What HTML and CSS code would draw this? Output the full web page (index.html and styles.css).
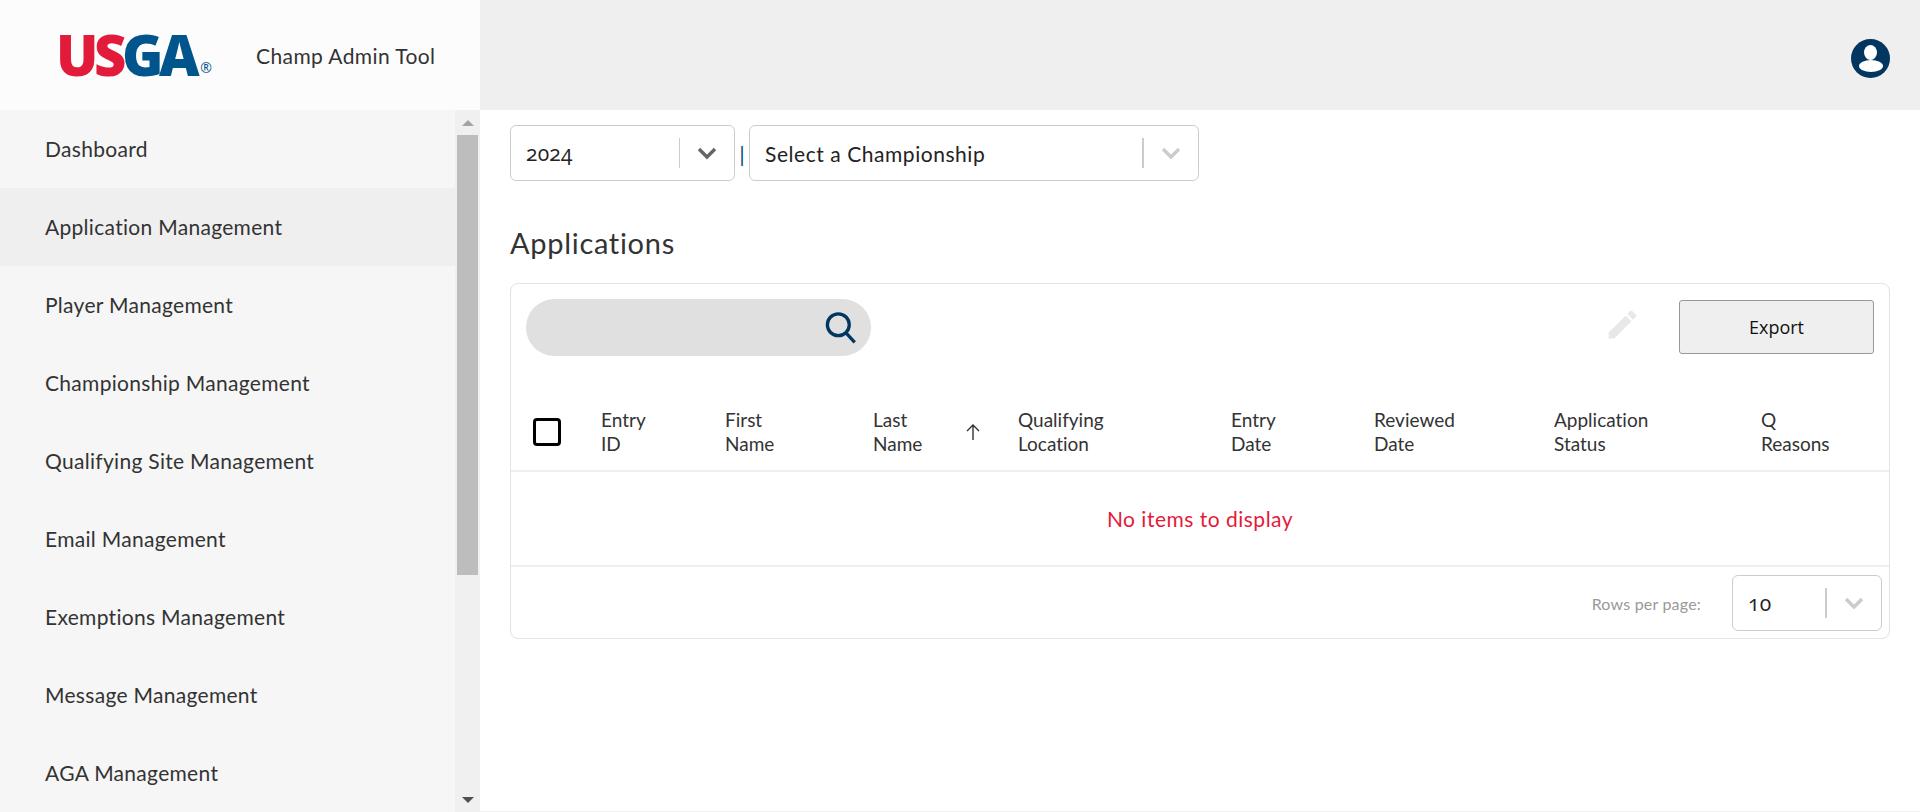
FILE: index.html
```html
<!DOCTYPE html>
<html lang="en">
<head>
    <meta charset="UTF-8">
    <title>Champ Admin Tool</title>
    <link rel="stylesheet" href="styles.css">
</head>
<body>
    <div class="topbar">
        <div class="brand">
            <div class="logo"><span class="logo-red">US</span><span class="logo-blue">GA</span><span class="logo-reg">&reg;</span></div>
            <div class="brand-title">Champ Admin Tool</div>
        </div>
        <div class="topbar-right">
            <svg class="avatar" viewBox="0 0 39 39">
                <circle cx="19.5" cy="19.5" r="19.5" fill="#00365f"/>
                <ellipse cx="19.5" cy="13.5" rx="6.5" ry="7.5" fill="#fff"/>
                <ellipse cx="20" cy="27" rx="12" ry="6" fill="#fff"/>
            </svg>
        </div>
    </div>
    <div class="layout">
        <div class="sidebar">
            <div class="nav">
                <div class="nav-item">Dashboard</div>
                <div class="nav-item active">Application Management</div>
                <div class="nav-item">Player Management</div>
                <div class="nav-item">Championship Management</div>
                <div class="nav-item">Qualifying Site Management</div>
                <div class="nav-item">Email Management</div>
                <div class="nav-item">Exemptions Management</div>
                <div class="nav-item">Message Management</div>
                <div class="nav-item">AGA Management</div>
            </div>
            <div class="scrollbar">
                <div class="scroll-btn"><span class="arrow-up"></span></div>
                <div class="scroll-thumb"></div>
                <div class="scroll-rest"></div>
                <div class="scroll-btn"><span class="arrow-down"></span></div>
            </div>
        </div>
        <div class="main">
            <div class="filters">
                <div class="select select-year">
                    <div class="select-value nums">2024</div>
                    <div class="select-sep"></div>
                    <div class="select-arrow"><svg viewBox="0 0 20 14"><path d="M2 3l8 8 8-8" fill="none" stroke="#666" stroke-width="3.4"/></svg></div>
                </div>
                <span class="pipe">|</span>
                <div class="select select-champ">
                    <div class="select-value">Select a Championship</div>
                    <div class="select-sep wide"></div>
                    <div class="select-arrow"><svg viewBox="0 0 20 14"><path d="M2 3l8 8 8-8" fill="none" stroke="#ccc" stroke-width="3.4"/></svg></div>
                </div>
            </div>
            <h2 class="page-title">Applications</h2>
            <div class="card">
                <div class="toolbar">
                    <div class="search">
                        <svg viewBox="0 0 32 32"><circle cx="14" cy="13.5" r="10" fill="none" stroke="#00365f" stroke-width="3"/><path d="M21 21l8 8.5" stroke="#00365f" stroke-width="3" fill="none"/></svg>
                    </div>
                    <svg class="edit-icon" viewBox="0 0 24 24"><path fill="#e8e8e8" d="M3 17.25V21h3.75L17.81 9.94l-3.75-3.75L3 17.25zM20.71 7.04a1 1 0 0 0 0-1.41l-2.34-2.34a1 1 0 0 0-1.41 0l-1.83 1.83 3.75 3.75 1.83-1.83z"/></svg>
                    <button class="export-btn">Export</button>
                </div>
                <div class="table-head">
                    <div class="th th-check"><span class="checkbox"></span></div>
                    <div class="th">Entry<br>ID</div>
                    <div class="th">First<br>Name</div>
                    <div class="th th-sorted"><span>Last<br>Name</span><svg viewBox="0 0 16 18"><path d="M8 17V2M2 8l6-6 6 6" fill="none" stroke="#333" stroke-width="1.4"/></svg></div>
                    <div class="th">Qualifying<br>Location</div>
                    <div class="th">Entry<br>Date</div>
                    <div class="th">Reviewed<br>Date</div>
                    <div class="th">Application<br>Status</div>
                    <div class="th">Q<br>Reasons</div>
                </div>
                <div class="empty-row">No items to display</div>
                <div class="pagination">
                    <span class="rows-label">Rows per page:</span>
                    <div class="select select-rows">
                        <div class="select-value nums">10</div>
                        <div class="select-sep wide"></div>
                        <div class="select-arrow"><svg viewBox="0 0 20 14"><path d="M2 3l8 8 8-8" fill="none" stroke="#ccc" stroke-width="3.4"/></svg></div>
                    </div>
                </div>
            </div>
        </div>
    </div>
</body>
</html>
```

FILE: styles.css
```css
* {
    box-sizing: border-box;
}
html, body {
    height: 100%;
}
body {
    margin: 0;
    overflow: hidden;
    background: #fff;
    color: #333;
    font-family: Lato, "Open Sans", sans-serif;
    font-variant-ligatures: none;
}
.topbar {
    display: flex;
    height: 110px;
    background: #efefef;
}
.brand {
    display: flex;
    align-items: center;
    width: 480px;
    padding-left: 56px;
    background: #fcfcfc;
}
.logo {
    display: flex;
    align-items: flex-end;
    width: 200px;
    margin-top: -2px;
    font-family: "Open Sans", sans-serif;
    font-size: 56px;
    font-weight: 800;
    line-height: 1;
    letter-spacing: -4.4px;
}
.logo-red {
    color: #e31b3a;
}
.logo-blue {
    color: #00558c;
}
.logo-reg {
    margin: 0 0 7px 5px;
    color: #00558c;
    font-size: 14px;
    font-weight: 400;
    letter-spacing: 0;
    line-height: 1;
}
.brand-title {
    font-size: 21px;
    letter-spacing: 0.4px;
}
.topbar-right {
    display: flex;
    flex: 1;
    align-items: center;
    justify-content: flex-end;
    padding: 7px 30px 0 0;
}
.avatar {
    width: 39px;
    height: 39px;
}
.layout {
    display: flex;
    height: 702px;
}
.sidebar {
    display: flex;
    width: 480px;
    background: #f6f6f6;
}
.nav {
    flex: 1;
    overflow: hidden;
}
.nav-item {
    display: flex;
    align-items: center;
    height: 78px;
    padding: 0 0 1px 45px;
    font-size: 21px;
    letter-spacing: 0.3px;
}
.nav-item.active {
    background: #efefef;
}
.scrollbar {
    display: flex;
    flex-direction: column;
    align-items: center;
    width: 25px;
    background: #f0f0f0;
}
.scroll-btn {
    display: flex;
    flex: none;
    align-items: center;
    justify-content: center;
    width: 100%;
    height: 25px;
}
.arrow-up, .arrow-down {
    width: 0;
    height: 0;
    border-left: 6px solid transparent;
    border-right: 6px solid transparent;
}
.arrow-up {
    border-bottom: 6px solid #a3a3a3;
}
.arrow-down {
    margin-top: 1px;
    border-top: 6px solid #505050;
}
.scroll-thumb {
    flex: none;
    width: 21px;
    height: 440px;
    background: #bdbdbd;
}
.scroll-rest {
    flex: 1;
}
.main {
    flex: 1;
    padding: 15px 30px 0;
    border-bottom: 1px solid #f0f0f0;
}
.filters {
    display: flex;
    align-items: center;
}
.select {
    display: flex;
    align-items: center;
    height: 56px;
    padding-left: 15px;
    background: #fff;
    border: 1px solid #ccc;
    border-radius: 6px;
    color: #222;
    font-size: 21px;
}
.select-year {
    width: 225px;
}
.select-champ {
    width: 450px;
}
.select-rows {
    width: 150px;
}
.select-value {
    flex: 1;
    letter-spacing: 0.55px;
}
.nums {
    font-family: "Open Sans", sans-serif;
    font-variant-numeric: oldstyle-nums;
    letter-spacing: 0.2px;
}
.select-sep {
    width: 1px;
    height: 30px;
    background: #ccc;
}
.select-sep.wide {
    width: 2px;
}
.select-arrow {
    display: flex;
    align-items: center;
    justify-content: center;
    width: 54px;
}
.select-arrow svg {
    width: 20px;
    height: 14px;
}
.pipe {
    width: 14px;
    color: #00558c;
    font-size: 22px;
    text-align: center;
}
.page-title {
    margin: 42px 0 20px;
    font-size: 29px;
    font-weight: 400;
    line-height: 40px;
    letter-spacing: 0.7px;
}
.card {
    height: 356px;
    border: 1px solid #e3e3e3;
    border-radius: 8px;
}
.toolbar {
    display: flex;
    align-items: center;
    height: 87px;
    padding: 0 15px;
}
.search {
    display: flex;
    align-items: center;
    justify-content: flex-end;
    width: 345px;
    height: 57px;
    padding-right: 13px;
    background: #e0e0e0;
    border-radius: 29px;
}
.search svg {
    width: 35px;
    height: 35px;
}
.edit-icon {
    width: 37px;
    height: 37px;
    margin: 0 38px 7px auto;
}
.export-btn {
    width: 195px;
    height: 54px;
    margin-bottom: 2px;
    background: #efefef;
    border: 1px solid #999;
    border-radius: 3px;
    color: #111;
    font-family: "Open Sans", sans-serif;
    font-size: 18px;
}
.table-head {
    display: grid;
    grid-template-columns: 90px 124px 148px 145px 213px 143px 180px 207px 1fr;
    align-items: center;
    height: 101px;
    padding-top: 23px;
    border-bottom: 2px solid #efefef;
    font-size: 19px;
    line-height: 24px;
}
.th-check {
    display: flex;
    padding-left: 22px;
}
.checkbox {
    width: 28px;
    height: 28px;
    border: 3px solid #000;
    border-radius: 4px;
}
.th-sorted {
    display: flex;
    align-items: center;
}
.th-sorted span {
    width: 92px;
}
.th-sorted svg {
    width: 16px;
    height: 18px;
}
.empty-row {
    display: flex;
    align-items: center;
    justify-content: center;
    height: 95px;
    border-bottom: 2px solid #efefef;
    color: #e31b3a;
    font-size: 21px;
    letter-spacing: 0.5px;
}
.pagination {
    display: flex;
    align-items: center;
    justify-content: flex-end;
    height: 71px;
    padding: 1px 7px 0 0;
}
.rows-label {
    margin-right: 31px;
    color: #999;
    font-size: 16px;
    letter-spacing: 0.2px;
}
```
